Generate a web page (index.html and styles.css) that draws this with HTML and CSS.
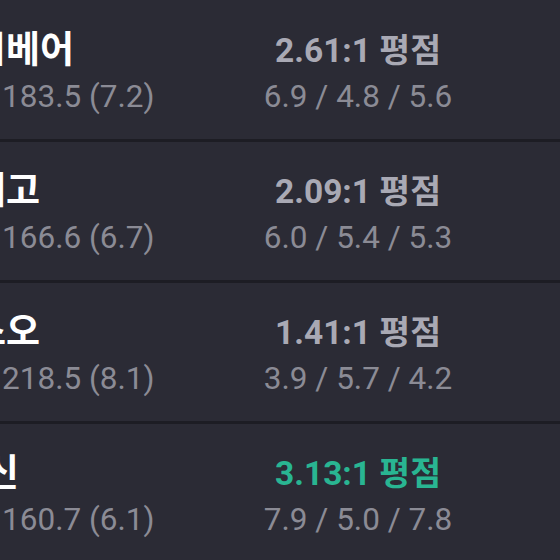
FILE: index.html
```html
<!DOCTYPE html>
<html lang="ko">
<head>
<meta charset="utf-8">
<link rel="stylesheet" href="styles.css">
</head>
<body>
<div class="list">
  <div class="row">
    <div class="side">
      <div class="name">토시베어</div>
      <div class="stat">72 / 183.5 (7.2)</div>
    </div>
    <div class="score">
      <div class="ratio">2.61:1 평점</div>
      <div class="stat">6.9 / 4.8 / 5.6</div>
    </div>
  </div>
  <div class="row">
    <div class="side">
      <div class="name">디에고</div>
      <div class="stat">72 / 166.6 (6.7)</div>
    </div>
    <div class="score">
      <div class="ratio">2.09:1 평점</div>
      <div class="stat">6.0 / 5.4 / 5.3</div>
    </div>
  </div>
  <div class="row">
    <div class="side">
      <div class="name">리스오</div>
      <div class="stat">72 / 218.5 (8.1)</div>
    </div>
    <div class="score">
      <div class="ratio">1.41:1 평점</div>
      <div class="stat">3.9 / 5.7 / 4.2</div>
    </div>
  </div>
  <div class="row">
    <div class="side">
      <div class="name">리&#8196;신</div>
      <div class="stat">72 / 160.7 (6.1)</div>
    </div>
    <div class="score">
      <div class="ratio best">3.13:1 평점</div>
      <div class="stat">7.9 / 5.0 / 7.8</div>
    </div>
  </div>
</div>
</body>
</html>
```
FILE: styles.css
```css
html, body {
  margin: 0;
  padding: 0;
  background: #2b2b35;
  overflow: hidden;
}
body {
  width: 560px;
  height: 560px;
  font-family: Roboto, "Noto Sans CJK KR", sans-serif;
}
.list {
  margin-left: -62px;
  padding-top: 1px;
}
.row {
  display: grid;
  grid-template-columns: 310px 220px;
  padding-top: 27px;
  height: 111px;
  border-bottom: 3px solid #1d1d24;
}
.side {
  text-align: left;
  white-space: nowrap;
}
.score {
  text-align: center;
  white-space: nowrap;
}
.name {
  font-size: 37px;
  line-height: 46px;
  font-weight: 700;
  color: #ffffff;
}
.ratio {
  font-size: 33.5px;
  line-height: 46px;
  font-weight: 700;
  color: #a9a9b4;
}
.ratio.best {
  color: #29b592;
}
.stat {
  font-size: 31.5px;
  line-height: 46px;
  color: #8b8b95;
}
```
